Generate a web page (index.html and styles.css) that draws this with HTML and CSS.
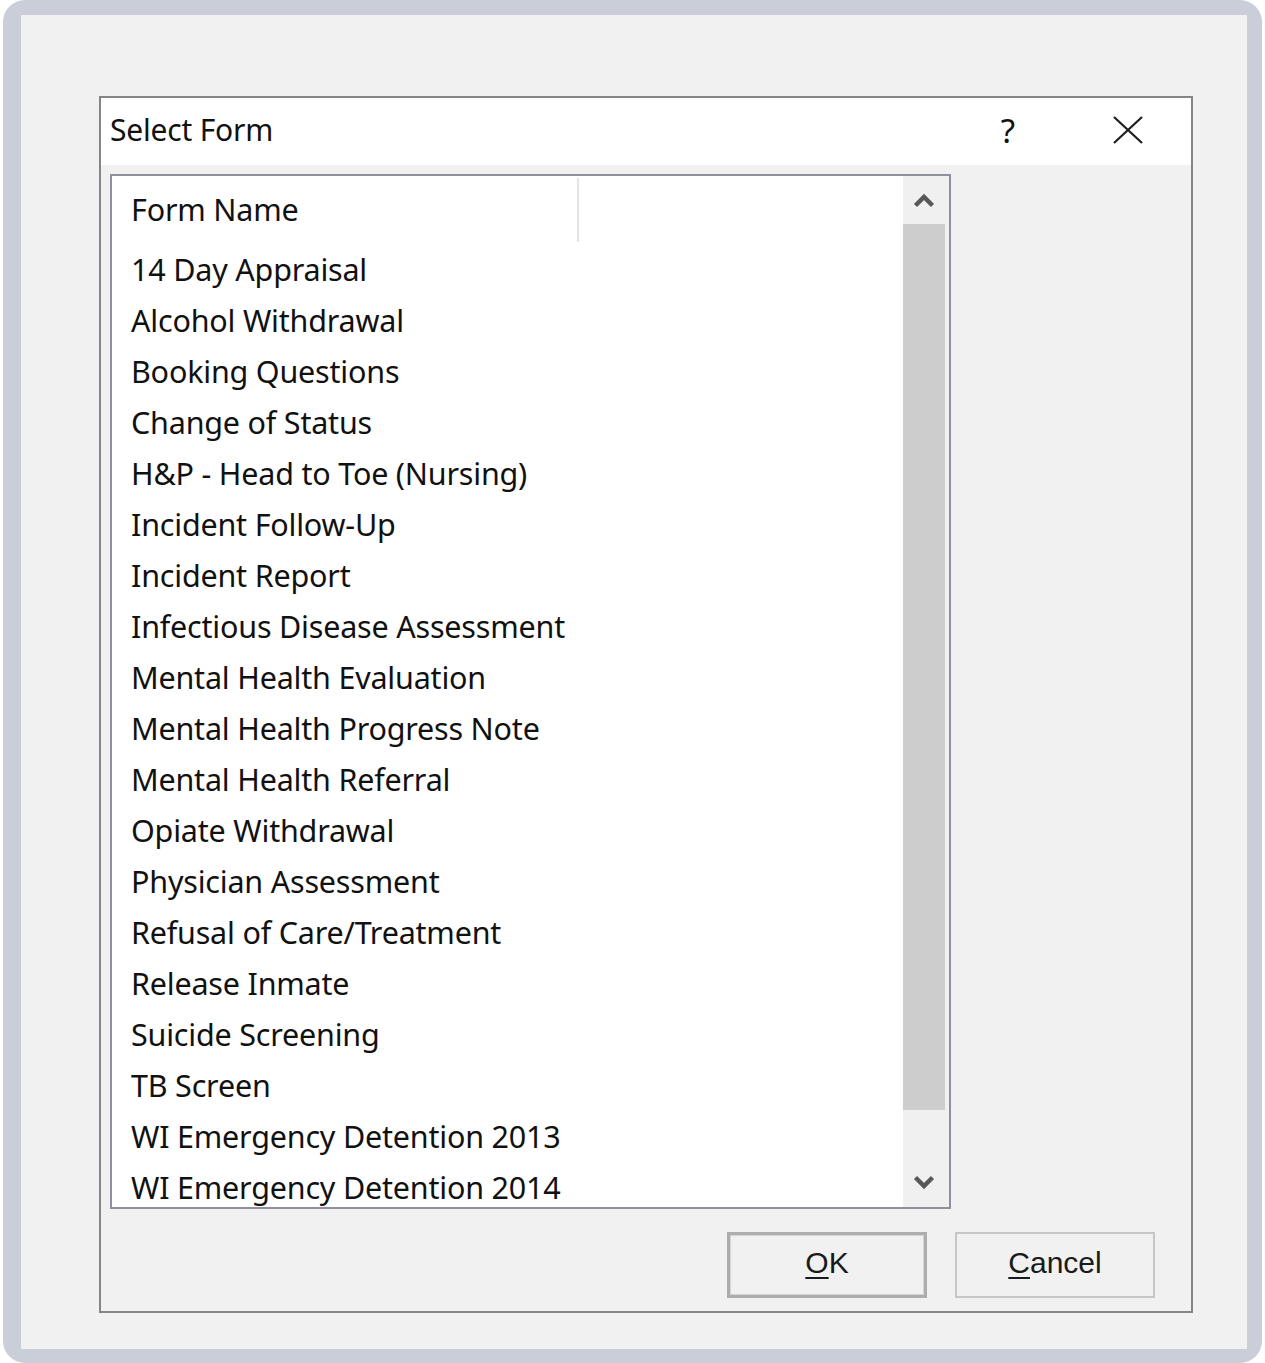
FILE: index.html
```html
<!DOCTYPE html>
<html lang="en">
<head>
<meta charset="utf-8">
<title>Select Form</title>
<link rel="stylesheet" href="styles.css">
</head>
<body>
<div class="frame">
  <div class="desk">
    <section class="dialog">
      <header class="titlebar">
        <span class="title">Select Form</span>
        <span class="help">?</span>
        <span class="close">
          <svg width="30" height="28" viewBox="0 0 30 28"><path d="M1 1 L29 27 M29 1 L1 27" stroke="#1e1e1e" stroke-width="2.2" fill="none"/></svg>
        </span>
      </header>
      <div class="body">
        <div class="listbox">
          <div class="list">
            <div class="list-header">
              <div class="col-head">Form Name</div>
            </div>
            <ul class="rows">
              <li>14 Day Appraisal</li>
              <li>Alcohol Withdrawal</li>
              <li>Booking Questions</li>
              <li>Change of Status</li>
              <li>H&amp;P - Head to Toe (Nursing)</li>
              <li>Incident Follow-Up</li>
              <li>Incident Report</li>
              <li>Infectious Disease Assessment</li>
              <li>Mental Health Evaluation</li>
              <li>Mental Health Progress Note</li>
              <li>Mental Health Referral</li>
              <li>Opiate Withdrawal</li>
              <li>Physician Assessment</li>
              <li>Refusal of Care/Treatment</li>
              <li>Release Inmate</li>
              <li>Suicide Screening</li>
              <li>TB Screen</li>
              <li>WI Emergency Detention 2013</li>
              <li>WI Emergency Detention 2014</li>
            </ul>
          </div>
          <div class="scrollbar">
            <div class="arrow">
              <svg width="22" height="16" viewBox="0 0 22 16"><polyline points="2.5,13.5 11,5 19.5,13.5" stroke="#585858" stroke-width="4.5" fill="none"/></svg>
            </div>
            <div class="track"><div class="thumb"></div></div>
            <div class="arrow">
              <svg width="22" height="16" viewBox="0 0 22 16"><polyline points="2.5,2.5 11,11 19.5,2.5" stroke="#585858" stroke-width="4.5" fill="none"/></svg>
            </div>
          </div>
        </div>
        <div class="actions">
          <button class="btn btn-default"><u>O</u>K</button>
          <button class="btn"><u>C</u>ancel</button>
        </div>
      </div>
    </section>
  </div>
</div>
</body>
</html>
```

FILE: styles.css
```css
html, body {
  margin: 0;
  padding: 0;
  background: #ffffff;
}

body {
  font-family: "Noto Sans", "Open Sans", sans-serif;
  color: #111111;
}

/* outer rounded frame */
.frame {
  margin-left: 3px;
  width: 1259px;
  height: 1363px;
  box-sizing: border-box;
  padding: 15px 15px 14px 18px;
  background: #c9ced8;
  border-radius: 22px;
}

.desk {
  height: 100%;
  box-sizing: border-box;
  background: #f0f1f0;
  padding: 81px 0 0 78px;
}

/* dialog window */
.dialog {
  width: 1094px;
  height: 1217px;
  box-sizing: border-box;
  border: 2px solid #858585;
  background: #f0f1f0;
  display: flex;
  flex-direction: column;
}

.titlebar {
  height: 67px;
  flex: none;
  background: #ffffff;
  display: flex;
  align-items: center;
  padding-left: 9px;
}

.title {
  font-size: 30px;
  letter-spacing: -0.2px;
  line-height: 1;
  margin-top: -4px;
}

.help {
  margin-left: auto;
  width: 40px;
  text-align: center;
  font-size: 33px;
  line-height: 1;
  margin-top: -2px;
}

.close {
  width: 60px;
  margin-left: 70px;
  margin-right: 33px;
  display: flex;
  justify-content: center;
  margin-top: -3px;
}

.body {
  flex: 1;
  padding: 9px 0 0 9px;
}

/* list view */
.listbox {
  width: 841px;
  height: 1035px;
  box-sizing: border-box;
  border: 2px solid #8e919b;
  display: flex;
  background: #ffffff;
}

.list {
  flex: 1;
  overflow: hidden;
  background: #ffffff;
}

.list-header {
  height: 69px;
  box-sizing: border-box;
  padding-top: 2px;
  display: flex;
}

.col-head {
  width: 446px;
  height: 64px;
  padding-left: 19px;
  border-right: 2px solid #e4e4e4;
  font-size: 30.5px;
  letter-spacing: -0.2px;
  line-height: 62px;
}

.rows {
  list-style: none;
  margin: 0;
  padding: 0 0 0 19px;
}

.rows li {
  height: 51px;
  line-height: 49px;
  font-size: 30.5px;
  letter-spacing: -0.2px;
  white-space: nowrap;
}

/* vertical scrollbar */
.scrollbar {
  width: 46px;
  flex: none;
  background: #f0f0f0;
  display: flex;
  flex-direction: column;
}

.arrow {
  height: 48px;
  flex: none;
  display: flex;
  align-items: center;
  justify-content: center;
  padding-right: 4px;
}

.track {
  flex: 1;
  padding-right: 4px;
}

.thumb {
  height: 886px;
  background: #cdcdcd;
}

/* buttons */
.actions {
  display: flex;
  justify-content: flex-end;
  gap: 28px;
  margin-top: 23px;
  padding-right: 36px;
}

.btn {
  width: 200px;
  height: 66px;
  box-sizing: border-box;
  background: #f0f1f0;
  border: 2px solid #c6c6c6;
  font-family: "Liberation Sans", Arial, sans-serif;
  font-size: 30px;
  color: #1a1a1a;
  padding: 0 0 5px;
  margin: 0;
}

.btn u {
  text-decoration-thickness: 2px;
  text-underline-offset: 4px;
}

.btn-default {
  border: 3px solid #adadad;
  box-shadow: inset 0 0 0 1px #d4d4d4;
}
```
